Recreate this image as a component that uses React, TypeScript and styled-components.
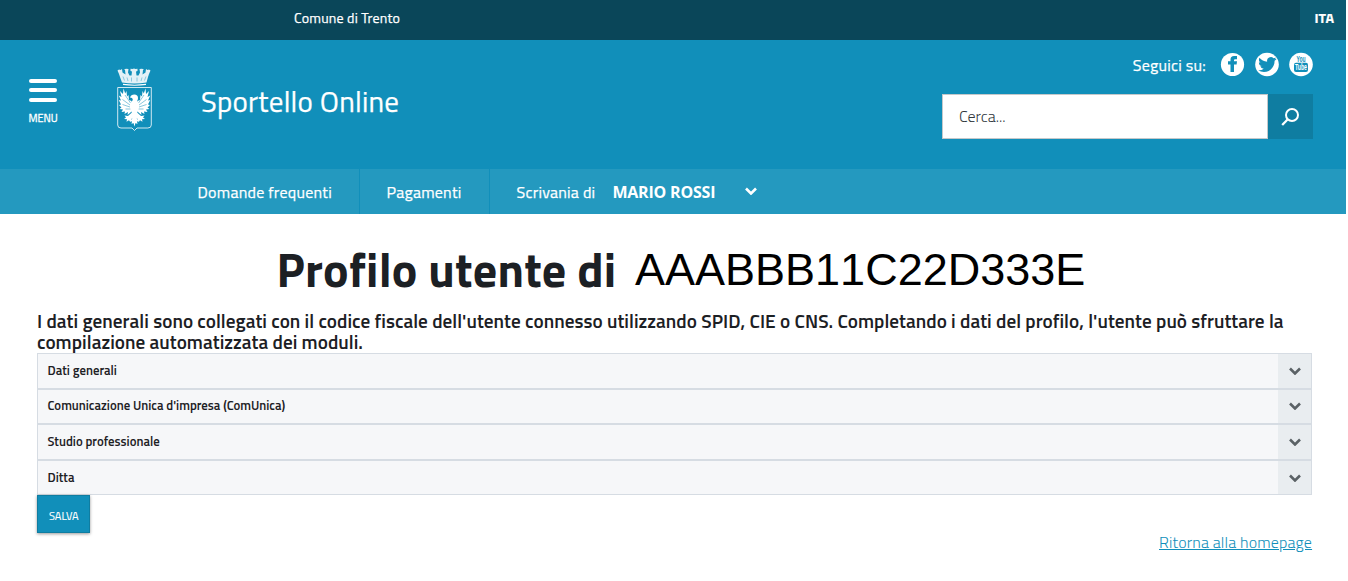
import React from "react";
import styled, { createGlobalStyle } from "styled-components";

const GlobalStyle = createGlobalStyle`
  * { box-sizing: border-box; }
  body {
    margin: 0;
    background: #fff;
    color: #1c2024;
    font-family: "Titillium Web", Roboto, "Open Sans", sans-serif;
  }
`;

const Page = styled.div`
  width: 1346px;
  height: 581px;
  overflow: hidden;
`;

const TopBar = styled.div`
  display: flex;
  justify-content: space-between;
  height: 40px;
  padding-left: 294px;
  background: #0a4659;
  color: #fff;
`;

const Owner = styled.span`
  font-size: 14px;
  line-height: 36px;
  letter-spacing: 0.2px;
  -webkit-text-stroke: 0.25px #fff;
`;

const Language = styled.span`
  width: 46px;
  padding-left: 14.5px;
  background: #0c5a72;
  font-size: 14.2px;
  font-weight: 700;
  line-height: 37px;
  -webkit-text-stroke: 0.2px #fff;
`;

const Header = styled.header`
  display: flex;
  height: 129px;
  padding: 0 33px 0 28px;
  background: #118fba;
  color: #fff;
`;

const MenuButton = styled.div`
  display: flex;
  flex-direction: column;
  width: 30px;
  margin: 39px 59px 0 0;
`;

const Bar = styled.span<{ $gap: number }>`
  width: 28px;
  height: 4px;
  margin: 0 0 ${(p) => p.$gap}px 1px;
  border-radius: 2px;
  background: #fff;
`;

const MenuLabel = styled.span`
  padding-left: 0.5px;
  font-size: 10.8px;
  font-weight: 400;
  line-height: 14px;
  -webkit-text-stroke: 0.3px #fff;
`;

const CrestSvg = styled.svg`
  width: 35px;
  height: 65px;
  margin-top: 27px;
`;

const SiteName = styled.div`
  flex: 1;
  margin-left: 49px;
  padding-top: 41px;
  font-size: 29px;
  line-height: 40px;
  letter-spacing: 0.25px;
  -webkit-text-stroke: 0.25px #fff;
`;

const Tools = styled.div`
  width: 371px;
  padding-top: 13px;
`;

const Social = styled.div`
  display: flex;
  justify-content: flex-end;
  gap: 10px;
  height: 24px;
  font-size: 16px;
  line-height: 25px;
`;

const SocialLabel = styled.span`
  margin-right: 5px;
  letter-spacing: 0.25px;
  -webkit-text-stroke: 0.25px #fff;
`;

const SocialSvg = styled.svg`
  width: 24px;
  height: 24px;
  overflow: visible;
`;

const Search = styled.div`
  display: flex;
  height: 45px;
  margin-top: 17px;
`;

const SearchField = styled.div`
  flex: 1;
  padding-left: 16px;
  border: 1px solid #c4c8ca;
  background: #fff;
  color: #30373d;
  font-size: 16px;
  font-weight: 300;
  line-height: 42px;
`;

const SearchButton = styled.div`
  display: flex;
  align-items: center;
  justify-content: center;
  width: 45px;
  padding-right: 1px;
  background: #0f7da1;
`;

const Nav = styled.nav`
  display: flex;
  height: 45px;
  padding-left: 171px;
  background: #2499bf;
  color: #fff;
  font-size: 16px;
  line-height: 46px;
  letter-spacing: 0.25px;
  -webkit-text-stroke: 0.25px #fff;
`;

const NavItem = styled.div<{ $width?: number }>`
  display: flex;
  width: ${(p) => (p.$width ? `${p.$width}px` : "auto")};
  padding-left: 26.5px;
  border-right: ${(p) => (p.$width ? "1px solid #118fba" : "0")};
`;

const UserName = styled.b`
  width: 103px;
  margin: 0 30px 0 17px;
  font-family: "Open Sans", sans-serif;
  letter-spacing: -0.2px;
  white-space: nowrap;
  -webkit-text-stroke: 0;
`;

const Chevron = styled.svg`
  width: 12px;
  height: 8px;
`;

const NavChevron = styled(Chevron)`
  margin-top: 18px;
`;

const Main = styled.main`
  display: flow-root;
  padding: 0 34px 0 37px;
`;

const Title = styled.h1`
  display: flex;
  align-items: flex-start;
  height: 60px;
  margin: 26px 0 0 239.5px;
  font-size: 48px;
  font-weight: 700;
  line-height: 60px;
  white-space: nowrap;
`;

const TitleText = styled.span`
  width: 358.5px;
  letter-spacing: 0.2px;
`;

const FiscalCode = styled.span`
  color: #000;
  font-family: "Liberation Sans", Arial, sans-serif;
  font-size: 45px;
  font-weight: 400;
  font-kerning: none;
  line-height: 59px;
`;

const Intro = styled.p`
  margin: 10px 0 1px;
  font-size: 19.2px;
  font-weight: 600;
  line-height: 21px;
  letter-spacing: 0.035px;
  white-space: nowrap;
`;

const Section = styled.div<{ $height: number }>`
  display: flex;
  justify-content: space-between;
  height: ${(p) => p.$height}px;
  border: 1px solid #d6dce3;
  background: #f6f7f9;
  font-size: 12.8px;
  font-weight: 600;
`;

const SectionTitle = styled.span<{ $line: number }>`
  padding-left: 9.5px;
  line-height: ${(p) => p.$line}px;
`;

const Toggle = styled.span<{ $top: number }>`
  display: flex;
  justify-content: center;
  width: 33px;
  padding-top: ${(p) => p.$top}px;
  background: #e9edf0;
`;

const SaveButton = styled.div`
  width: 53px;
  height: 38px;
  padding-left: 11px;
  border: 1px solid #0f7da1;
  background: #118fba;
  box-shadow: 0 1px 3px rgba(0, 0, 0, 0.4);
  color: #fff;
  font-size: 11px;
  line-height: 41px;
  -webkit-text-stroke: 0.15px #fff;
`;

const HomeLink = styled.a`
  display: block;
  width: 153px;
  margin: -1px 0 0 auto;
  color: #118fba;
  font-size: 16px;
  font-weight: 300;
  line-height: 20px;
  letter-spacing: 0.14px;
  text-decoration: underline;
  white-space: nowrap;
`;

function Wing() {
  return (
    <>
      <path d="M14.500 34L12 33l-.5-5-1.500 1.500L9.500 24l-1.300 2.500L6.500 21.500 6 27 3 24l1.500 6L1.800 28.500 4 33.500 1.800 33 4 37.500 2 38l2.500 2.500L2.500 42l3.500.5L4.500 45 8 44.500 7.500 47l3.500-2-.5 3 3-2.500L16 42z" />
      <path d="M15.500 45L11 49l-3.500-.5 1.500 2-2 1.500 3 .3-.5 2.500 2.500-1.500 1.500 2 .8-3.300 2.700-2z" />
      <path d="M13.500 36L8 28M13 38L5.500 32.500M13 40l-7.500-2.500M13.500 42l-5 0" stroke="#118fba" strokeWidth=".7" opacity=".7" />
    </>
  );
}

function Crest() {
  return (
    <CrestSvg viewBox="0 0 35 65" fill="#fff">
      <path d="M.5 3.500l1.500-1 1.500.5 1.500-1 .5 3.500 3 2-.5-4.500-1-.5 2-.8 2.500.3-.5 3.500 1.500 3h2l.5-4-1.500-.5V1.800l2 .2 1.500-.5 1.500.5 2-.2V4l-1.500.5.5 4h2l1.500-3-.5-3.500 2.500-.3 2 .8-1 .5-.5 4.500 3-2 .5-3.500 1.500 1 1.500-.5 1.500 1-1.500 3.500-1 3-1.500 5.500q-12 1.800-24.500 0L3 10 2 7z" opacity=".88" />
      <path d="M6 9.500l1.500 4M10 10.500l1 3.500M14.500 10.500v4M20 10.500v4M25 10.500l-1 3.500M29 9.500l-1.500 4" stroke="#118fba" strokeWidth=".6" opacity=".7" />
      <path d="M6 17.400q11.500 1.600 23 0" fill="none" stroke="#fff" strokeWidth="1.100" />
      <path d="M.7 20.500h33.600V58q0 3-3.500 3H20l-2.500 2.500L15 61H4Q.7 61 .7 58z" fill="none" stroke="#fff" strokeWidth="1" opacity=".8" />
      <Wing />
      <g transform="translate(35 0) scale(-1 1)">
        <Wing />
      </g>
      <path d="M13 30.500q1-3 4.300-3 3.700.2 3.700 3.500 0 1.500-.8 3L22 37l-1 7-2 4 1 4 2.500 2-2.500.5.5 2.500-2-1-1 3.500-1-3.500-2 1 .5-2.500-2.500-.5 2.500-2 1-4-2-4-1-7 2.500-3.500q.8-1.500-.5-2.500z" />
    </CrestSvg>
  );
}

function Arrow() {
  return <path d="M1 1.500l5 5 5-5" fill="none" stroke="currentColor" strokeWidth="2.600" />;
}

const sections = [
  { title: "Dati generali", height: 36, line: 32, top: 13 },
  { title: "Comunicazione Unica d'impresa (ComUnica)", height: 35, line: 31, top: 12 },
  { title: "Studio professionale", height: 36, line: 32, top: 13 },
  { title: "Ditta", height: 35, line: 32, top: 13 },
];

export default function App() {
  return (
    <Page>
      <GlobalStyle />
      <TopBar>
        <Owner>Comune di Trento</Owner>
        <Language>ITA</Language>
      </TopBar>
      <Header>
        <MenuButton>
          <Bar $gap={5} />
          <Bar $gap={6} />
          <Bar $gap={9} />
          <MenuLabel>MENU</MenuLabel>
        </MenuButton>
        <Crest />
        <SiteName>Sportello Online</SiteName>
        <Tools>
          <Social>
            <SocialLabel>Seguici su:</SocialLabel>
            <SocialSvg viewBox="0 0 24 24">
              <circle cx="11.500" cy="11.500" r="11.600" fill="#fff" />
              <path d="M9.500 19v-7.500H7V8.300h2.500V6.500Q9.500 3 13 3h3v3.200h-2q-1 0-1 1v1.100h3l-.4 3.200H13V19z" fill="#118fba" />
            </SocialSvg>
            <SocialSvg viewBox="0 0 24 24">
              <circle cx="12" cy="11.500" r="11.800" fill="#fff" />
              <path transform="translate(3.200 2.400) scale(.76)" d="M23.950 4.570a10 10 0 0 1-2.820.77 4.960 4.960 0 0 0 2.160-2.720 9.900 9.900 0 0 1-3.120 1.180 4.920 4.920 0 0 0-8.380 4.480C7.690 8.090 4.070 6.130 1.640 3.160a4.820 4.820 0 0 0-.66 2.480c0 1.710.87 3.210 2.190 4.100a4.900 4.900 0 0 1-2.230-.62v.06a4.920 4.920 0 0 0 3.950 4.830 5 5 0 0 1-2.210.08 4.940 4.940 0 0 0 4.600 3.420A9.870 9.870 0 0 1 0 19.540a13.990 13.990 0 0 0 7.550 2.210c9.050 0 14-7.500 14-13.980 0-.21 0-.42-.02-.63a9.940 9.940 0 0 0 2.460-2.550z" fill="#118fba" />
            </SocialSvg>
            <SocialSvg viewBox="0 0 24 24">
              <circle cx="12" cy="11.500" r="11.800" fill="#fff" />
              <rect x="5" y="9.700" width="14" height="9.300" rx="2" fill="#118fba" />
              <g fontFamily="Liberation Sans" fontWeight="700" textAnchor="middle">
                <text x="12" y="9" fontSize="8.500" fill="#118fba" textLength="9" lengthAdjust="spacingAndGlyphs">You</text>
                <text x="12" y="17.300" fontSize="8.500" fill="#fff" textLength="12" lengthAdjust="spacingAndGlyphs">Tube</text>
              </g>
            </SocialSvg>
          </Social>
          <Search>
            <SearchField>Cerca...</SearchField>
            <SearchButton>
              <svg width="18" height="18" viewBox="0 0 18 18" fill="none" stroke="#fff" strokeWidth="2">
                <circle cx="11" cy="7" r="6" />
                <path d="M6.800 11.300L1.200 17" strokeWidth="2.300" />
              </svg>
            </SearchButton>
          </Search>
        </Tools>
      </Header>
      <Nav>
        <NavItem $width={189}>Domande frequenti</NavItem>
        <NavItem $width={130}>Pagamenti</NavItem>
        <NavItem>
          Scrivania di
          <UserName>MARIO ROSSI</UserName>
          <NavChevron viewBox="0 0 12 8"><Arrow /></NavChevron>
        </NavItem>
      </Nav>
      <Main>
        <Title>
          <TitleText>Profilo utente di</TitleText>
          <FiscalCode>AAABBB11C22D333E</FiscalCode>
        </Title>
        <Intro>
          I dati generali sono collegati con il codice fiscale dell'utente connesso utilizzando SPID, CIE o CNS. Completando i dati del profilo, l'utente può sfruttare la
          <br />
          compilazione automatizzata dei moduli.
        </Intro>
        {sections.map((s) => (
          <Section key={s.title} $height={s.height}>
            <SectionTitle $line={s.line}>{s.title}</SectionTitle>
            <Toggle $top={s.top}>
              <Chevron viewBox="0 0 12 8" color="#5b6266"><Arrow /></Chevron>
            </Toggle>
          </Section>
        ))}
        <SaveButton>SALVA</SaveButton>
        <HomeLink>Ritorna alla homepage</HomeLink>
      </Main>
    </Page>
  );
}
